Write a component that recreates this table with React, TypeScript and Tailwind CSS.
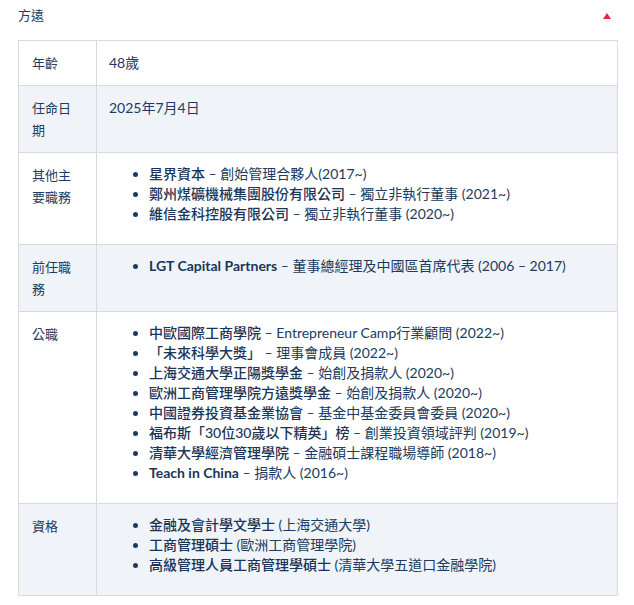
import React from 'react';

// profile rows for the expanded panel
type Item = { lead: string; rest: string; latin?: boolean };

const otherRoles: Item[] = [
    { lead: '星界資本', rest: ' – 創始管理合夥人(2017~)' },
    { lead: '鄭州煤礦機械集團股份有限公司', rest: ' – 獨立非執行董事 (2021~)' },
    { lead: '維信金科控股有限公司', rest: ' – 獨立非執行董事 (2020~)' },
];

const pastRoles: Item[] = [
    { lead: 'LGT Capital Partners', rest: ' – 董事總經理及中國區首席代表 (2006 – 2017)', latin: true },
];

const publicRoles: Item[] = [
    { lead: '中歐國際工商學院', rest: ' – Entrepreneur Camp行業顧問 (2022~)' },
    { lead: '「未來科學大獎」', rest: ' – 理事會成員 (2022~)' },
    { lead: '上海交通大學正陽獎學金', rest: ' – 始創及捐款人 (2020~)' },
    { lead: '歐洲工商管理學院方遠獎學金', rest: ' – 始創及捐款人 (2020~)' },
    { lead: '中國證券投資基金業協會', rest: ' – 基金中基金委員會委員 (2020~)' },
    { lead: '福布斯「30位30歲以下精英」榜', rest: ' – 創業投資領域評判 (2019~)' },
    { lead: '清華大學經濟管理學院', rest: ' – 金融碩士課程職場導師 (2018~)' },
    { lead: 'Teach in China', rest: ' – 捐款人 (2016~)', latin: true },
];

const degrees: Item[] = [
    { lead: '金融及會計學文學士', rest: ' (上海交通大學)' },
    { lead: '工商管理碩士', rest: ' (歐洲工商管理學院)' },
    { lead: '高級管理人員工商管理學碩士', rest: ' (清華大學五道口金融學院)' },
];

const BulletList = ({ items }: { items: Item[] }) => (
    <ul className="list-disc pl-[40px] mb-[9px] leading-[20px] text-[14px]">
        {items.map((it) => (
            <li key={it.lead}>
                <span className={it.latin ? 'font-bold text-[#1a3557]' : 'font-medium text-[#1a3557]'}>{it.lead}</span>
                <span>{it.rest}</span>
            </li>
        ))}
    </ul>
);

const Row = ({ label, shaded, children }: { label: string; shaded?: boolean; children: React.ReactNode }) => (
    <tr className={shaded ? 'bg-[#f0f4f8]' : 'bg-white'}>
        <td className="w-[78px] border border-[#d9dadc] pl-[13px] pr-[13px] py-[11px] align-top leading-[22px] text-[13px]">
            {label}
        </td>
        <td className="border border-[#d9dadc] px-[12px] py-[11px] align-top leading-[22px] text-[14px]">
            {children}
        </td>
    </tr>
);

export default function App() {
    return (
        <div
            className="w-[634px] h-[605px] bg-white text-[#203b5e] pl-[18px] pr-[16px]"
            style={{ fontFamily: 'Lato, "Noto Sans CJK TC", sans-serif' }}
        >
            {/* --- Header --- */}
            <div className="h-8 flex items-center justify-between pr-[7px]">
                <span className="text-[13px]">方遠</span>
                <span className="w-0 h-0 border-l-[4px] border-r-[4px] border-b-[6px] border-l-transparent border-r-transparent border-b-[#e3263d]"></span>
            </div>

            {/* --- Details --- */}
            <table className="mt-2 w-full table-fixed border-collapse">
                <colgroup>
                    <col className="w-[78px]" />
                    <col />
                </colgroup>
                <tbody>
                    <Row label="年齡">48歲</Row>
                    <Row label="任命日期" shaded>2025年7月4日</Row>
                    <Row label="其他主要職務">
                        <BulletList items={otherRoles} />
                    </Row>
                    <Row label="前任職務" shaded>
                        <BulletList items={pastRoles} />
                    </Row>
                    <Row label="公職">
                        <BulletList items={publicRoles} />
                    </Row>
                    <Row label="資格" shaded>
                        <BulletList items={degrees} />
                    </Row>
                </tbody>
            </table>
        </div>
    );
}
